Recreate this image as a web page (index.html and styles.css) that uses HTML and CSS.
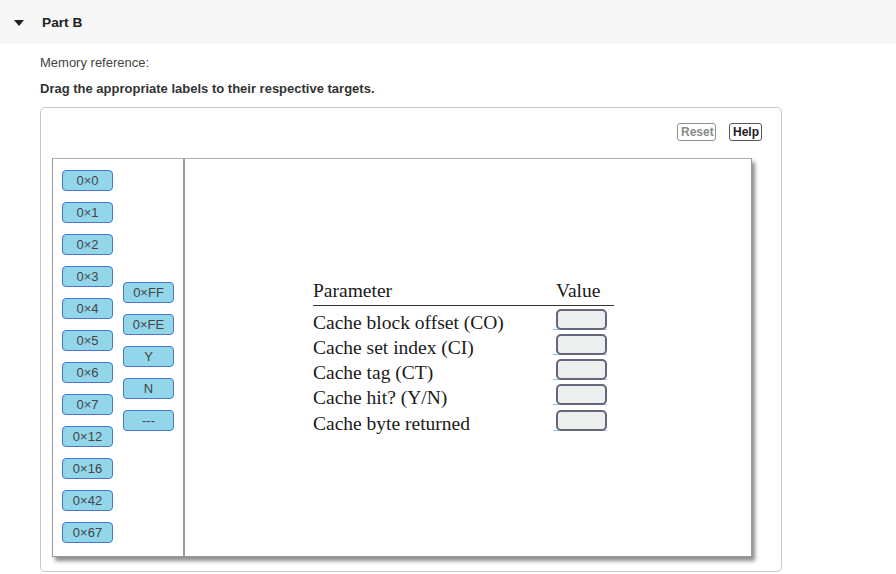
FILE: index.html
```html
<!DOCTYPE html>
<html>
<head>
<meta charset="utf-8">
<link rel="stylesheet" href="styles.css">
</head>
<body>
<div class="part-header">
  <span class="caret"></span>
  <span class="part-title">Part B</span>
</div>
<div class="content">
  <p class="memref">Memory reference:</p>
  <p class="instr">Drag the appropriate labels to their respective targets.</p>
  <div class="dnd-box">
    <div class="toolbar">
      <button class="btn btn-reset">Reset</button>
      <button class="btn btn-help">Help</button>
    </div>
    <div class="canvas">
      <div class="source">
        <div class="col col-a">
          <div class="label">0×0</div>
          <div class="label">0×1</div>
          <div class="label">0×2</div>
          <div class="label">0×3</div>
          <div class="label">0×4</div>
          <div class="label">0×5</div>
          <div class="label">0×6</div>
          <div class="label">0×7</div>
          <div class="label">0×12</div>
          <div class="label">0×16</div>
          <div class="label">0×42</div>
          <div class="label">0×67</div>
        </div>
        <div class="col col-b">
          <div class="label">0×FF</div>
          <div class="label">0×FE</div>
          <div class="label">Y</div>
          <div class="label">N</div>
          <div class="label">---</div>
        </div>
      </div>
      <div class="target-area">
        <div class="ptable">
          <div class="prow phead">
            <span class="pname">Parameter</span>
            <span class="pval">Value</span>
          </div>
          <div class="pbody">
            <div class="prow"><span class="pname">Cache block offset (CO)</span><span class="slot"><span class="drop"></span></span></div>
            <div class="prow"><span class="pname">Cache set index (CI)</span><span class="slot"><span class="drop"></span></span></div>
            <div class="prow"><span class="pname">Cache tag (CT)</span><span class="slot"><span class="drop"></span></span></div>
            <div class="prow"><span class="pname">Cache hit? (Y/N)</span><span class="slot"><span class="drop"></span></span></div>
            <div class="prow"><span class="pname">Cache byte returned</span><span class="slot"><span class="drop"></span></span></div>
          </div>
        </div>
      </div>
    </div>
  </div>
</div>
</body>
</html>
```

FILE: styles.css
```css
* { box-sizing: border-box; }
html, body { margin: 0; padding: 0; background: #fff; }
body { font-family: "Liberation Sans", Arial, sans-serif; color: #333; width: 896px; height: 574px; overflow: hidden; }

.part-header {
  height: 44px;
  background: #f7f7f7;
  display: flex;
  align-items: center;
  padding-left: 14px;
}
.caret {
  width: 0; height: 0;
  border-left: 5px solid transparent;
  border-right: 5px solid transparent;
  border-top: 6px solid #222;
  margin-right: 18px;
  margin-top: 1px;
}
.part-title { font-size: 13.7px; font-weight: bold; color: #222; }

.content { padding: 11px 0 0 40px; }
.memref { margin: 0; font-size: 13px; line-height: 16px; color: #444; }
.instr { margin: 10px 0 10px; font-size: 13px; line-height: 16px; font-weight: bold; color: #333; }

.dnd-box {
  width: 742px;
  height: 465px;
  border: 1px solid #c8c8c8;
  border-radius: 5px;
  padding: 15px 19px 0 11px;
}
.toolbar { display: flex; justify-content: flex-end; gap: 13px; height: 18px; margin-bottom: 17px; }
.btn {
  font-family: "Liberation Sans", Arial, sans-serif;
  font-size: 12px;
  font-weight: bold;
  height: 18px;
  line-height: 16px;
  padding: 0 3px;
  background: #fff;
  border: 1px solid #7a7a7a;
  border-radius: 3px;
}
.btn-reset { color: #8a8a8a; width: 39px; border-color: #8c9090; }
.btn-help { color: #222; width: 33px; border-color: #555; }

.canvas {
  width: 700px;
  height: 399px;
  border: 1px solid #9a9a9a;
  border-top-color: #b0b0b0;
  box-shadow: 3px 4px 4px rgba(0,0,0,0.45);
  display: flex;
  background: #fff;
}
.source {
  width: 132px;
  border-right: 2px solid #9a9a9a;
  display: flex;
  gap: 10px;
  padding: 11px 0 0 9px;
}
.col { display: flex; flex-direction: column; gap: 11px; }
.col-b { margin-top: 112px; }
.label {
  width: 51px;
  height: 21px;
  background: #93d6ea;
  border: 1px solid #4a78c8;
  border-radius: 4px;
  font-size: 13px;
  line-height: 19px;
  text-align: center;
  color: #444;
}

.target-area { flex: 1; padding: 120px 0 0 128px; }
.ptable { width: 301px; font-family: "Liberation Serif", "Times New Roman", serif; font-size: 19.5px; color: #1a1a1a; }
.prow { display: flex; height: 25.25px; line-height: 25px; }
.phead { height: 27px; line-height: 24px; border-bottom: 1px solid #333; }
.pbody { padding-top: 3.5px; }
.pname { width: 243px; }
.pval { width: 58px; }
.slot {
  display: block;
  margin-top: -1px;
  margin-left: -3px;
  padding-left: 3px;
  width: 54px;
  height: 21px;
  border-bottom: 1px solid #8cc4ec;
}
.drop {
  display: block;
  width: 51px;
  height: 21px;
  background: #edefef;
  border: 2px solid #66667a;
  border-radius: 5px;
}
```
